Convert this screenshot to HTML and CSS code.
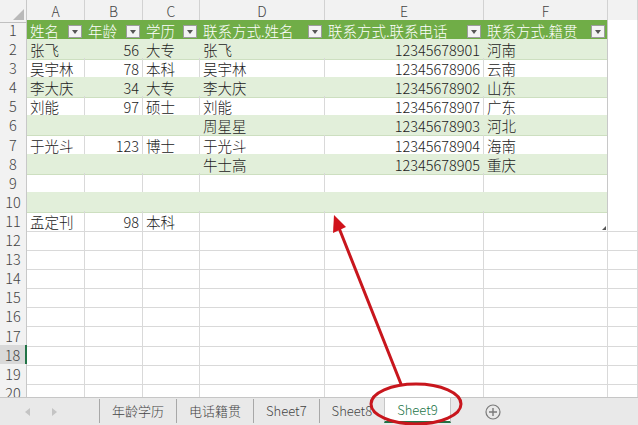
FILE: index.html
```html
<!DOCTYPE html>
<html lang="zh-CN">
<head>
  <meta charset="UTF-8" />
  <title>Sheet9</title>
  <link rel="stylesheet" href="styles.css">
</head>
<body>
  <div class="sheet">
    <div class="row cols">
      <div class="corner"></div>
      <div class="ch">A</div><div class="ch">B</div><div class="ch">C</div>
      <div class="ch">D</div><div class="ch">E</div><div class="ch">F</div>
      <div class="ch"></div>
    </div>

    <!-- таблица -->
    <div class="row tb hdr">
      <div class="rh">1</div>
      <div class="c">姓名<span class="flt"></span></div>
      <div class="c">年龄<span class="flt"></span></div>
      <div class="c">学历<span class="flt"></span></div>
      <div class="c">联系方式.姓名<span class="flt"></span></div>
      <div class="c">联系方式.联系电话<span class="flt"></span></div>
      <div class="c last">联系方式.籍贯<span class="flt"></span></div>
      <div class="c g"></div>
    </div>
    <div class="row tb band">
      <div class="rh">2</div>
      <div class="c">张飞</div><div class="c num">56</div><div class="c">大专</div>
      <div class="c">张飞</div><div class="c num">12345678901</div><div class="c last">河南</div>
      <div class="c g"></div>
    </div>
    <div class="row tb">
      <div class="rh">3</div>
      <div class="c">吴宇林</div><div class="c num">78</div><div class="c">本科</div>
      <div class="c">吴宇林</div><div class="c num">12345678906</div><div class="c last">云南</div>
      <div class="c g"></div>
    </div>
    <div class="row tb band">
      <div class="rh">4</div>
      <div class="c">李大庆</div><div class="c num">34</div><div class="c">大专</div>
      <div class="c">李大庆</div><div class="c num">12345678902</div><div class="c last">山东</div>
      <div class="c g"></div>
    </div>
    <div class="row tb">
      <div class="rh">5</div>
      <div class="c">刘能</div><div class="c num">97</div><div class="c">硕士</div>
      <div class="c">刘能</div><div class="c num">12345678907</div><div class="c last">广东</div>
      <div class="c g"></div>
    </div>
    <div class="row tb band">
      <div class="rh">6</div>
      <div class="c"></div><div class="c num"></div><div class="c"></div>
      <div class="c">周星星</div><div class="c num">12345678903</div><div class="c last">河北</div>
      <div class="c g"></div>
    </div>
    <div class="row tb">
      <div class="rh">7</div>
      <div class="c">于光斗</div><div class="c num">123</div><div class="c">博士</div>
      <div class="c">于光斗</div><div class="c num">12345678904</div><div class="c last">海南</div>
      <div class="c g"></div>
    </div>
    <div class="row tb band">
      <div class="rh">8</div>
      <div class="c"></div><div class="c num"></div><div class="c"></div>
      <div class="c">牛士高</div><div class="c num">12345678905</div><div class="c last">重庆</div>
      <div class="c g"></div>
    </div>
    <div class="row tb">
      <div class="rh">9</div>
      <div class="c"></div><div class="c"></div><div class="c"></div>
      <div class="c"></div><div class="c"></div><div class="c last"></div>
      <div class="c g"></div>
    </div>
    <div class="row tb band">
      <div class="rh">10</div>
      <div class="c"></div><div class="c"></div><div class="c"></div>
      <div class="c"></div><div class="c"></div><div class="c last"></div>
      <div class="c g"></div>
    </div>
    <div class="row tb end">
      <div class="rh">11</div>
      <div class="c">孟定刊</div><div class="c num">98</div><div class="c">本科</div>
      <div class="c"></div><div class="c"></div><div class="c last"><span class="rs"></span></div>
      <div class="c g"></div>
    </div>

    <!-- пустые строки -->
    <div class="row"><div class="rh">12</div><div class="c"></div><div class="c"></div><div class="c"></div><div class="c"></div><div class="c"></div><div class="c"></div><div class="c"></div></div>
    <div class="row"><div class="rh">13</div><div class="c"></div><div class="c"></div><div class="c"></div><div class="c"></div><div class="c"></div><div class="c"></div><div class="c"></div></div>
    <div class="row"><div class="rh">14</div><div class="c"></div><div class="c"></div><div class="c"></div><div class="c"></div><div class="c"></div><div class="c"></div><div class="c"></div></div>
    <div class="row"><div class="rh">15</div><div class="c"></div><div class="c"></div><div class="c"></div><div class="c"></div><div class="c"></div><div class="c"></div><div class="c"></div></div>
    <div class="row"><div class="rh">16</div><div class="c"></div><div class="c"></div><div class="c"></div><div class="c"></div><div class="c"></div><div class="c"></div><div class="c"></div></div>
    <div class="row"><div class="rh">17</div><div class="c"></div><div class="c"></div><div class="c"></div><div class="c"></div><div class="c"></div><div class="c"></div><div class="c"></div></div>
    <div class="row"><div class="rh sel">18</div><div class="c"></div><div class="c"></div><div class="c"></div><div class="c"></div><div class="c"></div><div class="c"></div><div class="c"></div></div>
    <div class="row"><div class="rh">19</div><div class="c"></div><div class="c"></div><div class="c"></div><div class="c"></div><div class="c"></div><div class="c"></div><div class="c"></div></div>
    <div class="row"><div class="rh">20</div><div class="c"></div><div class="c"></div><div class="c"></div><div class="c"></div><div class="c"></div><div class="c"></div><div class="c"></div></div>
  </div>

  <!-- ярлыки листов -->
  <div class="tabs">
    <div class="nav"><span class="arr left"></span><span class="arr right"></span></div>
    <div class="tab">年龄学历</div>
    <div class="tab">电话籍贯</div>
    <div class="tab">Sheet7</div>
    <div class="tab">Sheet8</div>
    <div class="tab active">Sheet9</div>
    <div class="add">
      <svg width="16" height="16" viewBox="0 0 16 16">
        <circle cx="8" cy="8" r="7" fill="none" stroke="#7a7a7a" stroke-width="1.2"/>
        <path d="M8 4v8M4 8h8" stroke="#7a7a7a" stroke-width="1.4"/>
      </svg>
    </div>
  </div>

  <!-- пометка красным -->
  <svg class="mark" width="638" height="425" viewBox="0 0 638 425">
    <line x1="401" y1="384" x2="339" y2="228" stroke="#c8161d" stroke-width="3" stroke-linecap="round"/>
    <polygon points="334,215 346,227 333,233" fill="#d0121b"/>
    <ellipse cx="416" cy="404" rx="45" ry="20" fill="none" stroke="#c8161d" stroke-width="3"/>
  </svg>
</body>
</html>
```

FILE: styles.css
```css
body {
  margin: 0;
  width: 638px;
  height: 425px;
  overflow: hidden;
  position: relative;
  background: #fff;
  font-family: "Noto Sans CJK SC", "Noto Sans", sans-serif;
  font-weight: 300;
  color: #222;
}

.sheet {
  height: 397px;
  overflow: hidden;
}
.row {
  display: grid;
  grid-template-columns: 27px 58px 58px 57px 125px 159px 124px 30px;
  height: 19.1px;
}
.row.cols {
  height: 20px;
}

/* заголовки столбцов и строк */
.corner, .ch, .rh {
  box-sizing: border-box;
  background: #f2f2f2;
  color: #444;
  text-align: center;
}
.corner {
  position: relative;
  border-right: 1px solid #c8c8c8;
  border-bottom: 1px solid #c0c0c0;
}
.corner::after {
  content: "";
  position: absolute;
  right: 2px;
  bottom: 2px;
  border-left: 11px solid transparent;
  border-bottom: 11px solid #b9b9b9;
}
.ch {
  border-right: 1px solid #d2d2d2;
  border-bottom: 1px solid #c0c0c0;
  font-size: 14px;
  line-height: 22px;
}
.rh {
  border-right: 1px solid #c8c8c8;
  border-bottom: 1px solid #d8d8d8;
  font-size: 14.5px;
  line-height: 20px;
}
.rh.sel {
  background: #d9d9d9;
  border-right: 2px solid #217346;
}

/* ячейки */
.c {
  position: relative;
  box-sizing: border-box;
  border-right: 1px solid #d9d9d9;
  border-bottom: 1px solid #d9d9d9;
  padding: 0 3px;
  display: flex;
  align-items: flex-end;
  font-size: 14.5px;
  line-height: 18px;
  white-space: nowrap;
  overflow: hidden;
}
.c.num {
  justify-content: flex-end;
}

/* таблица Excel */
.tb .c {
  border-bottom-color: #cddfc0;
}
.band .c {
  background: #e2efda;
  border-right-color: #e2efda;
}
.hdr .c {
  background: #70ad47;
  color: #fff;
  border-right-color: #70ad47;
  border-bottom-color: #70ad47;
}
.tb .c.last {
  border-right-color: #c8c8c8;
}
.tb .c.g {
  background: #fff;
  border-right-color: #d9d9d9;
  border-bottom-color: #d9d9d9;
}
.end .c {
  border-bottom-color: #d9d9d9;
}

.flt {
  position: absolute;
  right: 2px;
  bottom: 2px;
  width: 14px;
  height: 13px;
  box-sizing: border-box;
  background: #f3f3f3;
  border: 1px solid #9c9c9c;
}
.flt::after {
  content: "";
  position: absolute;
  left: 3px;
  top: 4px;
  border-left: 3.5px solid transparent;
  border-right: 3.5px solid transparent;
  border-top: 4px solid #555;
}
.rs {
  position: absolute;
  right: 1px;
  bottom: 1px;
  border-left: 4px solid transparent;
  border-bottom: 4px solid #555;
}

/* ярлыки листов */
.tabs {
  height: 28px;
  box-sizing: border-box;
  background: #e9e9e9;
  border-top: 1px solid #c6c6c6;
  display: flex;
  align-items: flex-start;
  font-size: 13px;
  color: #444;
}
.nav {
  width: 99px;
  height: 27px;
  display: flex;
  align-items: center;
  gap: 22px;
  padding-left: 25px;
  box-sizing: border-box;
}
.arr {
  border-top: 4px solid transparent;
  border-bottom: 4px solid transparent;
}
.arr.left {
  border-right: 5px solid #c4c4c4;
}
.arr.right {
  border-left: 5px solid #c4c4c4;
}
.tab {
  height: 24px;
  line-height: 24px;
  padding: 0 12px;
  border-left: 1px solid #a8a8a8;
  margin-top: 1px;
}
.tab.active {
  background: #fff;
  color: #217346;
  margin-top: 0;
  height: 23px;
  line-height: 24px;
  border-left-color: #c6c6c6;
  border-right: 1px solid #c6c6c6;
  border-bottom: 2px solid #217346;
}
.add {
  margin-left: 34px;
  height: 27px;
  display: flex;
  align-items: center;
}

.mark {
  position: absolute;
  left: 0;
  top: 0;
  pointer-events: none;
}
```
